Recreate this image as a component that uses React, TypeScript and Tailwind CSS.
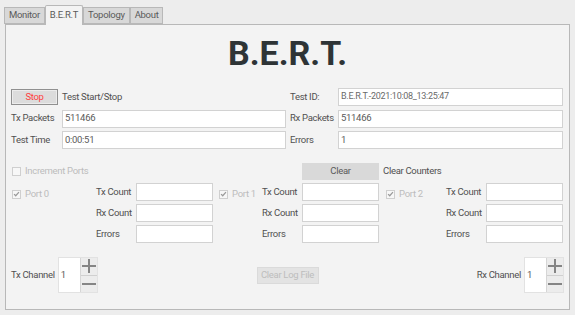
import React from "react";

function Tab({ label, selected }: { label: string; selected?: boolean }) {
  return selected ? (
    <div className="relative z-10 h-[20px] -mb-px px-[4px] flex items-center border border-b-0 border-[#b8b8b8] bg-[#f3f3f3] text-[#5a5a5a] rounded-t-[2px]">
      {label}
    </div>
  ) : (
    <div className="h-[17px] px-[4px] flex items-center border border-[#b8b8b8] bg-[#d8d8d8] text-[#5a5a5a]">
      {label}
    </div>
  );
}

function Field({ value, small }: { value?: string; small?: boolean }) {
  return (
    <div
      className={
        "h-[18px] bg-white border border-[#d2d2d2] flex items-center pl-[2px] " +
        (small ? "text-[#6a6a6a] text-[9px]" : "text-[#5a5a5a]")
      }
    >
      {value}
    </div>
  );
}

function Check({ label, checked }: { label: string; checked?: boolean }) {
  return (
    <div className="flex items-center gap-[4px] text-[#bcbcbc]">
      <div className="w-[9px] h-[9px] border border-[#cfcfcf] bg-[#f7f7f7] flex items-center justify-center">
        {checked && (
          <svg width="8" height="8" viewBox="0 0 8 8">
            <path d="M1.2 4.2 L3.1 6 L6.8 1.8" fill="none" stroke="#9a9a9a" strokeWidth="1.4" />
          </svg>
        )}
      </div>
      <span>{label}</span>
    </div>
  );
}

function Spin() {
  return (
    <div className="flex h-[36px] w-[40px] border border-[#e2e2e2] bg-white">
      <div className="flex-1 flex items-center pl-[2px] text-[#5a5a5a]">1</div>
      <div className="w-[17px] flex flex-col border-l border-[#d6d6d6]">
        <div className="flex-1 bg-[#ececec] border-b border-[#d0d0d0] flex items-center justify-center">
          <svg width="14" height="14" viewBox="0 0 14 14">
            <path d="M0 7 H14 M7 0 V14" stroke="#858585" strokeWidth="2" />
          </svg>
        </div>
        <div className="flex-1 bg-[#ececec] flex items-center justify-center">
          <svg width="14" height="14" viewBox="0 0 14 14">
            <path d="M0 7 H14" stroke="#858585" strokeWidth="2" />
          </svg>
        </div>
      </div>
    </div>
  );
}

function PortBlock({ label, pad }: { label: string; pad: string }) {
  return (
    <div className={"row-span-3 self-start pt-[4px] " + pad}>
      <Check label={label} checked />
    </div>
  );
}

export default function App() {
  return (
    <div className="w-[575px] h-[315px] overflow-hidden bg-[#ededed] font-['Roboto',sans-serif] text-[9.5px] tracking-[-0.3px] text-[#505050]">
      <div className="flex items-end pl-[4px] h-[24px]">
        <Tab label="Monitor" />
        <Tab label="B.E.R.T" selected />
        <Tab label="Topology" />
        <Tab label="About" />
      </div>
      <div className="mx-[5px] h-[286px] border border-[#b8b8b8] bg-[#f3f3f3] px-[5px]">
        <div className="h-[57px] flex items-center justify-center font-bold text-[34px] tracking-[0px] text-[#2e3436]">
          B.E.R.T.
        </div>
        <div className="mt-[6px] grid grid-cols-[51px_224px_52px_225px] gap-y-[3.5px] items-center">
          <div className="h-[18px] flex items-center">
            <div className="w-[47px] h-[16px] border border-[#909090] bg-[#dcdcdc] shadow-[inset_0_0_0_1px_#ececec] flex items-center justify-center text-[#ff3c3c]">
              Stop
            </div>
          </div>
          <div className="h-[18px] flex items-center">Test Start/Stop</div>
          <div className="pl-[4px]">Test ID:</div>
          <Field value="B.E.R.T.-2021:10:08_13:25:47" small />

          <div>Tx Packets</div>
          <Field value="511466" />
          <div className="pl-[4px]">Rx Packets</div>
          <Field value="511466" />

          <div>Test Time</div>
          <Field value="0:00:51" />
          <div className="pl-[4px]">Errors</div>
          <Field value="1" />
        </div>

        <div className="mt-[13px] grid grid-cols-[85px_40px_77px_49px_40px_77px_67px_40px_77px] grid-rows-[18px_18px_18px_18px] gap-y-[3px] items-center">
          <div className="col-span-5 pl-[1px]">
            <Check label="Increment Ports" />
          </div>
          <div className="h-[17px] bg-[#d9d9d9] flex items-center justify-center text-[#5a5a5a]">Clear</div>
          <div className="col-span-3 pl-[4px]">Clear Counters</div>

          <PortBlock label="Port 0" pad="pl-[1px]" />
          <div>Tx Count</div>
          <Field />
          <PortBlock label="Port 1" pad="pl-[6px]" />
          <div>Tx Count</div>
          <Field />
          <PortBlock label="Port 2" pad="pl-[7px]" />
          <div>Tx Count</div>
          <Field />

          <div>Rx Count</div>
          <Field />
          <div>Rx Count</div>
          <Field />
          <div>Rx Count</div>
          <Field />

          <div>Errors</div>
          <Field />
          <div>Errors</div>
          <Field />
          <div>Errors</div>
          <Field />
        </div>

        <div className="mt-[14px] grid grid-cols-[1fr_auto_1fr] items-center">
          <div className="flex items-center gap-[3px]">
            <span>Tx Channel</span>
            <Spin />
          </div>
          <div className="w-[62px] h-[17px] bg-[#e3e3e3] border border-[#dadada] flex items-center justify-center text-[#bdbdbd]">
            Clear Log File
          </div>
          <div className="flex items-center justify-end gap-[3px]">
            <span>Rx Channel</span>
            <Spin />
          </div>
        </div>
      </div>
    </div>
  );
}
